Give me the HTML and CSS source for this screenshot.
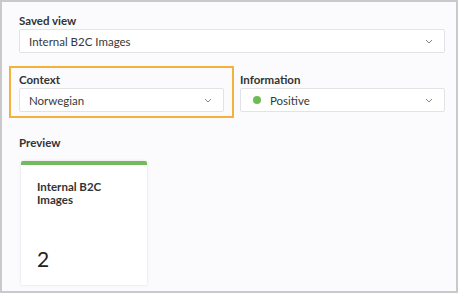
FILE: index.html
```html
<!DOCTYPE html>
<html>
<head>
    <meta charset="UTF-8">
    <link rel="stylesheet" href="styles.css">
</head>
<body>
    <div class="frame">
        <div class="field">
            <div class="label">Saved view</div>
            <div class="select">
                <span class="value">Internal B2C Images</span>
                <svg class="chevron" width="8" height="5" viewBox="0 0 8 5"><path d="M1 1l3 3 3-3" fill="none" stroke="#888" stroke-width="1"/></svg>
            </div>
        </div>

        <div class="row">
            <div class="field context">
                <div class="label">Context</div>
                <div class="select">
                    <span class="value">Norwegian</span>
                    <svg class="chevron" width="8" height="5" viewBox="0 0 8 5"><path d="M1 1l3 3 3-3" fill="none" stroke="#888" stroke-width="1"/></svg>
                </div>
            </div>
            <div class="field info">
                <div class="label">Information</div>
                <div class="select">
                    <span class="value"><span class="dot"></span>Positive</span>
                    <svg class="chevron" width="8" height="5" viewBox="0 0 8 5"><path d="M1 1l3 3 3-3" fill="none" stroke="#888" stroke-width="1"/></svg>
                </div>
            </div>
        </div>

        <div class="preview">
            <div class="label">Preview</div>
            <div class="card">
                <div class="card-title">Internal B2C<br>Images</div>
                <div class="card-count">2</div>
            </div>
        </div>
    </div>
</body>
</html>
```

FILE: styles.css
```css
* {
    margin: 0;
    padding: 0;
    box-sizing: border-box;
}

body {
    font-family: Lato, 'Open Sans', sans-serif;
    color: #333;
    background: #fff;
}

.frame {
    width: 458px;
    height: 293px;
    border: 2px solid #c9c9cb;
    background: #fbfbfd;
    padding: 10px 11px 0 17px;
}

.label {
    font-size: 11.5px;
    font-weight: 700;
    color: #333;
    height: 17px;
    line-height: 17px;
}

.select {
    display: flex;
    align-items: center;
    justify-content: space-between;
    height: 24px;
    background: #fff;
    border: 1px solid #e3e3e7;
    border-radius: 2px;
    padding: 0 11px 0 9px;
    font-size: 11.5px;
    color: #383838;
}

.value {
    display: flex;
    align-items: center;
}

.dot {
    width: 8px;
    height: 8px;
    border-radius: 50%;
    background: #6cbd57;
    margin: 0 9px 0 3px;
}

.row {
    display: flex;
    margin-top: 13px;
    margin-left: -10px;
}

.context {
    width: 225px;
    padding: 3px 8px 4px 8px;
    border: 2px solid #f4b13c;
}

.info {
    flex: 1;
    padding-top: 5px;
    margin-left: 6px;
}

.preview {
    margin-top: 16px;
}

.card {
    width: 126px;
    height: 124px;
    margin: 10px 0 0 2px;
    background: #fff;
    border-top: 4px solid #74b95f;
    border-radius: 2px;
    box-shadow: 0 0 3px rgba(0, 0, 0, 0.12);
    padding: 15px 16px 14px 16px;
    display: flex;
    flex-direction: column;
    justify-content: space-between;
}

.card-title {
    font-size: 11.5px;
    font-weight: 700;
    line-height: 13px;
    color: #333;
}

.card-count {
    font-size: 21px;
    font-weight: 400;
    color: #222;
    line-height: 24px;
}
```
